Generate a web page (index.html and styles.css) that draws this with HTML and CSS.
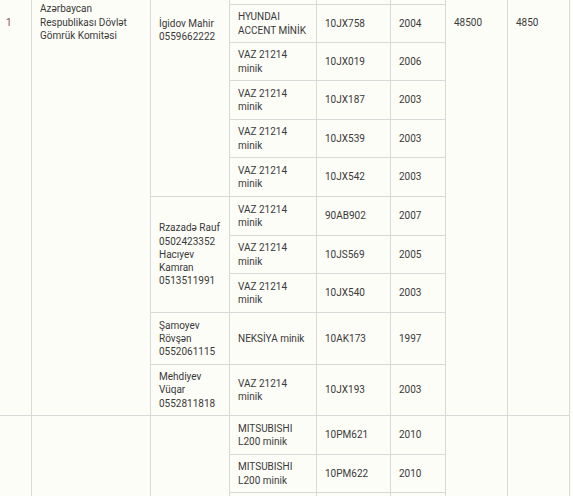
FILE: index.html
```html
<!DOCTYPE html>
<html lang="az">
<head>
<meta charset="utf-8">
<title>Avtomobillər</title>
<link rel="stylesheet" href="styles.css">
</head>
<body>
<div class="sheet">
  <div class="cell num span-11 lead-num">1</div>
  <div class="cell org span-11 lead-org">Azərbaycan Respublikası Dövlət Gömrük Komitəsi</div>
  <div class="cell person span-6 lead-person">İgidov Mahir 0559662222</div>
  <div class="cell"></div>
  <div class="cell"></div>
  <div class="cell"></div>
  <div class="cell span-11 lead-num">48500</div>
  <div class="cell span-11 lead-num">4850</div>

  <div class="cell car">HYUNDAI ACCENT MİNİK</div>
  <div class="cell">10JX758</div>
  <div class="cell">2004</div>

  <div class="cell car">VAZ 21214 minik</div>
  <div class="cell">10JX019</div>
  <div class="cell">2006</div>

  <div class="cell car">VAZ 21214 minik</div>
  <div class="cell">10JX187</div>
  <div class="cell">2003</div>

  <div class="cell car">VAZ 21214 minik</div>
  <div class="cell">10JX539</div>
  <div class="cell">2003</div>

  <div class="cell car">VAZ 21214 minik</div>
  <div class="cell">10JX542</div>
  <div class="cell">2003</div>

  <div class="cell person span-3">Rzazadə Rauf 0502423352 Hacıyev Kamran 0513511991</div>
  <div class="cell car">VAZ 21214 minik</div>
  <div class="cell">90AB902</div>
  <div class="cell">2007</div>

  <div class="cell car">VAZ 21214 minik</div>
  <div class="cell">10JS569</div>
  <div class="cell">2005</div>

  <div class="cell car">VAZ 21214 minik</div>
  <div class="cell">10JX540</div>
  <div class="cell">2003</div>

  <div class="cell person">Şamoyev Rövşən 0552061115</div>
  <div class="cell car">NEKSİYA minik</div>
  <div class="cell">10AK173</div>
  <div class="cell">1997</div>

  <div class="cell person">Mehdiyev Vüqar 0552811818</div>
  <div class="cell car">VAZ 21214 minik</div>
  <div class="cell">10JX193</div>
  <div class="cell">2003</div>

  <div class="cell num span-3"></div>
  <div class="cell org span-3"></div>
  <div class="cell person span-3"></div>
  <div class="cell car">MITSUBISHI L200 minik</div>
  <div class="cell">10PM621</div>
  <div class="cell">2010</div>
  <div class="cell span-3"></div>
  <div class="cell span-3"></div>

  <div class="cell car">MITSUBISHI L200 minik</div>
  <div class="cell">10PM622</div>
  <div class="cell">2010</div>

  <div class="cell car"></div>
  <div class="cell"></div>
  <div class="cell"></div>
</div>
</body>
</html>
```

FILE: styles.css
```css
html, body {
  margin: 0;
  padding: 0;
  overflow: hidden;
  background: #fdfdf7;
}

body {
  font-family: Roboto, "Liberation Sans", Arial, sans-serif;
  font-size: 10px;
  line-height: 1.3333;
  color: #3a3a3a;
}

.sheet {
  display: grid;
  grid-template-columns: 31px 118px 78px 86px 73px 54px 61px 61px;
  grid-template-rows: 4px 37px 37px 38px 37px 38px 38px 37px 38px 51px 50px 38px 37px 3px;
  gap: 1px;
  width: max-content;
  padding-right: 1px;
  background: #d9d9d9;
}

.cell {
  background: #fdfdf7;
  padding: 0 8px;
  display: flex;
  flex-direction: column;
  justify-content: center;
  overflow: hidden;
}

.num {
  padding-left: 6px;
  padding-right: 2px;
  color: #8c4a6b;
}

.person {
  padding-right: 4px;
}

.span-3 { grid-row: span 3; }
.span-6 { grid-row: span 6; }
.span-11 { grid-row: span 11; }

.lead-num,
.lead-org,
.lead-person {
  justify-content: flex-start;
}

.lead-num { padding-top: 15.6px; }
.lead-org { padding-top: 2.3px; }
.lead-person { padding-top: 16.6px; }
```
